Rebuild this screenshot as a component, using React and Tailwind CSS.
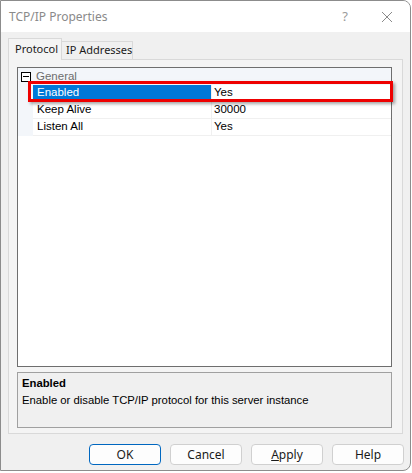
import React from "react";

const rows = [
  { name: "Enabled", value: "Yes", selected: true },
  { name: "Keep Alive", value: "30000" },
  { name: "Listen All", value: "Yes" },
];

function DialogButton({ children, primary }) {
  return (
    <button
      className={`w-[72px] h-[21px] rounded-[4px] bg-[#fdfdfd] text-[12px] text-[#1a1a1a] leading-none flex items-center justify-center border ${
        primary ? "border-[#0067c0]" : "border-[#d0d0d0]"
      }`}
    >
      {children}
    </button>
  );
}

export default function App() {
  return (
    <div className="w-[412px] h-[473px] bg-white relative" style={{ fontFamily: '"Noto Sans", "Open Sans", sans-serif' }}>
      <div className="w-[411px] h-[471px] border border-[#8c8c8c] rounded-tr-[8px] rounded-br-[8px] overflow-hidden flex flex-col bg-[#f0f0f0]">
        {/* title bar */}
        <div className="h-[31px] bg-white flex items-center pl-[8px] shrink-0">
          <span className="text-[12px] text-[#8a8a8a] flex-1">TCP/IP Properties</span>
          <span className="text-[13px] text-[#9a9a9a] w-[20px] text-center mr-[26px]">?</span>
          <svg width="12" height="12" viewBox="0 0 12 12" className="mr-[17px]">
            <path d="M1 1 L11 11 M11 1 L1 11" stroke="#8a8a8a" strokeWidth="1" />
          </svg>
        </div>

        {/* body */}
        <div className="flex-1 flex flex-col pt-[6px] pl-[7px]">
          {/* tabs */}
          <div className="flex items-end h-[21px] relative z-10 whitespace-nowrap">
            <div className="w-[54px] h-[22px] border border-b-0 border-[#d9d9d9] bg-[#f4f4f4] text-[11px] text-[#1a1a1a] flex items-center pl-[6px] -mb-[1px]">
              Protocol
            </div>
            <div className="w-[71px] h-[18px] border border-l-0 border-b-0 border-[#d9d9d9] bg-[#f0f0f0] text-[11px] text-[#1a1a1a] flex items-center pl-[4px]">
              IP Addresses
            </div>
          </div>

          {/* panel */}
          <div className="w-[395px] h-[375px] border border-[#d9d9d9] bg-[#f4f4f4] pl-[8px] pt-[7px] flex flex-col" style={{ fontFamily: '"Liberation Sans", Arial, sans-serif' }}>
            {/* property grid */}
            <div className="w-[375px] h-[300px] border border-[#6e6e6e] bg-white flex flex-col text-[11.5px]">
              <div className="h-[17px] flex bg-[#f3f6fa]">
                <div className="w-[15px] flex items-center justify-center pl-[1px]">
                  <div className="w-[10px] h-[10px] border border-black bg-white flex items-center justify-center">
                    <div className="w-[6px] h-[1px] bg-black" />
                  </div>
                </div>
                <div className="pl-[3px] text-[#6d6d6d] flex items-center">General</div>
              </div>
              {rows.map((r) => (
                <div key={r.name} className="h-[17px] flex">
                  <div className="w-[15px] bg-[#f3f6fa]" />
                  <div
                    className={`w-[179px] border-r border-b border-[#f0f0f0] pl-[4px] flex items-center ${
                      r.selected ? "bg-[#0078d7] text-white" : "text-black"
                    }`}
                  >
                    {r.name}
                  </div>
                  <div className="flex-1 border-b border-[#f0f0f0] pl-[2px] flex items-center text-black">
                    {r.value}
                  </div>
                </div>
              ))}
            </div>

            {/* description */}
            <div className="w-[375px] h-[56px] mt-[5px] border border-[#a0a0a0] bg-[#f0f0f0] px-[4px] pt-[3px] text-[11.3px] text-black">
              <div className="font-bold leading-[15px]">Enabled</div>
              <div className="leading-[15px] mt-[2px]">Enable or disable TCP/IP protocol for this server instance</div>
            </div>
          </div>

          {/* buttons */}
          <div className="flex justify-end gap-[9px] pr-[6px] mt-[10px]">
            <DialogButton primary>OK</DialogButton>
            <DialogButton>Cancel</DialogButton>
            <DialogButton>
              <span>
                <span className="underline">A</span>pply
              </span>
            </DialogButton>
            <DialogButton>Help</DialogButton>
          </div>
        </div>
      </div>

      {/* red highlight annotation */}
      <div className="absolute left-[28px] top-[81px] w-[365px] h-[21px] border-[3px] border-[#ee0000] shadow-[2px_2px_3px_rgba(0,0,0,0.35)]" />
    </div>
  );
}
